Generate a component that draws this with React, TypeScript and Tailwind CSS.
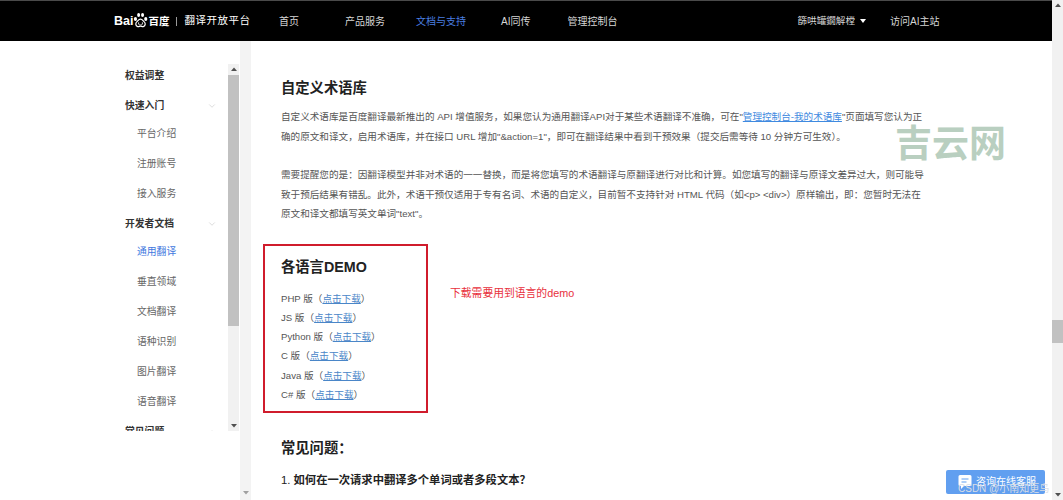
import { ChevronDown, ChevronUp } from "lucide-react";

const font = { fontFamily: '"Liberation Sans", "Noto Sans CJK SC", sans-serif' };

const sideItems = [
  { label: "权益调整", bold: true },
  { label: "快速入门", bold: true, arrow: "down" },
  { label: "平台介绍" },
  { label: "注册账号" },
  { label: "接入服务" },
  { label: "开发者文档", bold: true, arrow: "down" },
  { label: "通用翻译", active: true },
  { label: "垂直领域" },
  { label: "文档翻译" },
  { label: "语种识别" },
  { label: "图片翻译" },
  { label: "语音翻译" },
  { label: "常见问题", bold: true, arrow: "up" },
];

const demos = ["PHP 版", "JS 版", "Python 版", "C 版", "Java 版", "C# 版"];

function Paw() {
  return (
    <svg width="15" height="18" viewBox="0 0 16 18" className="-mt-[3px]">
      <ellipse cx="2.6" cy="8" rx="1.7" ry="2.1" fill="#fff" />
      <ellipse cx="6" cy="3.6" rx="1.6" ry="2.2" fill="#fff" />
      <ellipse cx="10.2" cy="3.6" rx="1.6" ry="2.2" fill="#fff" />
      <ellipse cx="13.6" cy="8" rx="1.7" ry="2.1" fill="#fff" />
      <path d="M8 8c-2 0-2.6 2-4 3-1.400 1-1.600 4.500 1 5 1.300.2 2-.4 3-.4s1.700.6 3 .4c2.600-.5 2.400-4 1-5-1.400-1-2-3-4-3z" fill="none" stroke="#fff" strokeWidth="1.300" />
      <path d="M6 11.500v2c0 1 4 1 4 0v-2" fill="none" stroke="#fff" strokeWidth="0.900" />
    </svg>
  );
}

function Header() {
  return (
    <header className="flex h-[41px] shrink-0 items-center border-t border-[#4a4a4a] bg-black pl-[114px] text-[10px] text-[#d6d6d6]">
      <div className="flex w-[165px] shrink-0 items-center text-white">
        <span className="text-[12.500px] font-bold leading-none">Bai</span>
        <Paw />
        <span className="text-[10.500px] font-bold leading-none">百度</span>
        <span className="mx-[7px] h-[9px] w-px bg-[#999]" />
        <span className="text-[10.500px] tracking-[0.500px]">翻译开放平台</span>
      </div>
      <span>首页</span>
      <span className="ml-[46px]">产品服务</span>
      <span className="ml-[31px] text-[#4a7fe0]">文档与支持</span>
      <span className="ml-[35px]">AI同传</span>
      <span className="ml-[37px]">管理控制台</span>
      <span className="ml-[180px] text-[9.600px]">篩哄罐鐗解樘</span>
      <span className="ml-[5px] h-0 w-0 border-x-[3px] border-t-[4px] border-x-transparent border-t-white" />
      <span className="ml-[24px]">访问AI主站</span>
    </header>
  );
}

function Sidebar() {
  return (
    <aside className="flex w-[240px] shrink-0">
      <nav className="mt-[21px] h-[369px] w-[228px] shrink-0 overflow-hidden pl-[125px] pr-[11px] text-[9.800px]">
        {sideItems.map((item) => (
          <div
            key={item.label}
            className={`flex h-[30px] shrink-0 items-center justify-between first:h-[29px] ${item.bold ? "font-bold text-[#333]" : item.active ? "pl-[12px] text-[#3f78e0]" : "pl-[12px] text-[#666]"} ${item.arrow === "down" ? "-mb-[2px]" : ""}`}
          >
            <span>{item.label}</span>
            {item.arrow === "down" && <ChevronDown size={10} strokeWidth={1} className="text-[#aaa]" />}
            {item.arrow === "up" && <ChevronUp size={10} strokeWidth={1} className="text-[#aaa]" />}
          </div>
        ))}
      </nav>
      <div className="mt-[23px] flex h-[367px] w-[11px] flex-col items-center bg-[#f1f1f1]">
        <Arrow up />
        <div className="mt-[1px] h-[251px] w-full bg-[#c1c1c1]" />
        <div className="flex-1" />
        <Arrow />
      </div>
    </aside>
  );
}

function Arrow({ up, color = "#505050" }: { up?: boolean; color?: string }) {
  return (
    <div className="flex h-[10px] w-full shrink-0 items-center justify-center">
      <svg width="6" height="4" viewBox="0 0 6 4">
        <path d={up ? "M3 0.500 6 4H0z" : "M0 0h6L3 3.500z"} fill={color} />
      </svg>
    </div>
  );
}

function Content() {
  return (
    <main className="min-w-0 flex-1 overflow-hidden pl-[30px] pt-[36px]">
      <h2 className="text-[14.300px] font-bold leading-[22px] text-[#222]">自定义术语库</h2>
      <div className="mt-[8px] whitespace-nowrap text-[9.600px] leading-[20px] text-[#555]">
        <p>
          自定义术语库是百度翻译最新推出的 API 增值服务，如果您认为通用翻译API对于某些术语翻译不准确，可在"
          <a className="text-[#3f8ae0] underline">管理控制台-我的术语库</a>
          "页面填写您认为正
        </p>
        <p>确的原文和译文，启用术语库，并在接口 URL 增加"&amp;action=1"，即可在翻译结果中看到干预效果（提交后需等待 10 分钟方可生效）。</p>
      </div>
      <div className="mt-[18px] whitespace-nowrap text-[9.600px] leading-[19.500px] text-[#555]">
        <p>需要提醒您的是：因翻译模型并非对术语的一一替换，而是将您填写的术语翻译与原翻译进行对比和计算。如您填写的翻译与原译文差异过大，则可能导</p>
        <p>致于预后结果有错乱。此外，术语干预仅适用于专有名词、术语的自定义，目前暂不支持针对 HTML 代码（如&lt;p&gt; &lt;div&gt;）原样输出，即：您暂时无法在</p>
        <p>原文和译文都填写英文单词"text"。</p>
      </div>
      <div className="mt-[20px] flex">
        <section className="-ml-[18px] h-[169px] w-[165px] shrink-0 border-2 border-[#d01c2c] pl-[16px] pt-[10px]">
          <h2 className="text-[14.300px] font-bold leading-[22px] text-[#222]">各语言DEMO</h2>
          <ul className="mt-[11px] whitespace-nowrap text-[9.600px] leading-[19.300px] text-[#555]">
            {demos.map((d) => (
              <li key={d}>
                {d}（<a className="text-[#4a86c8] underline">点击下载</a>）
              </li>
            ))}
          </ul>
        </section>
        <p className="ml-[22px] mt-[41px] whitespace-nowrap text-[10.800px] leading-[16px] text-[#e8303c]">下载需要用到语言的demo</p>
      </div>
      <h2 className="mt-[24px] text-[14.300px] font-bold leading-[22px] text-[#222]">常见问题：</h2>
      <p className="mt-[11px] whitespace-nowrap text-[11.300px] font-bold leading-[20px] text-[#222]">
        <span className="font-normal">1.</span> 如何在一次请求中翻译多个单词或者多段文本？
      </p>
    </main>
  );
}

export default function App() {
  return (
    <div className="relative flex h-[500px] w-[1063px] overflow-hidden bg-white" style={font}>
      <div className="flex w-[1052px] shrink-0 flex-col">
        <Header />
        <div className="flex min-h-0 flex-1">
          <Sidebar />
          <div className="flex w-[11px] shrink-0 flex-col justify-end bg-[#f3f3f3] pb-[2px]">
            <Arrow color="#a0a0a0" />
          </div>
          <Content />
        </div>
      </div>
      <div className="flex w-[11px] shrink-0 flex-col bg-[#f1f1f1]">
        <Arrow up />
        <div className="mt-[310px] h-[23px] w-full bg-[#c1c1c1]" />
        <div className="flex-1" />
        <Arrow />
      </div>

      {/* 图片水印 */}
      <div className="absolute left-[895px] top-[125px] text-[37px] font-bold leading-[40px] text-[#b9cfc0]">吉云网</div>

      {/* 在线客服 */}
      <div className="absolute left-[946px] top-[470px] flex h-[24px] w-[99px] items-center rounded-[2px] bg-[#619ff0] pb-[2px] pl-[12px] text-[10px] text-white">
        <svg width="14" height="15" viewBox="0 0 14 15" className="mr-[4px]">
          <path d="M2 1h10a1.500 1.500 0 0 1 1.500 1.500v8A1.500 1.500 0 0 1 12 12H6l-3 3v-3H2A1.500 1.500 0 0 1 .5 10.500v-8A1.500 1.500 0 0 1 2 1z" fill="#fff" />
          <path d="M3.500 5h7M3.500 8h5" stroke="#619ff0" strokeWidth="1.200" />
        </svg>
        咨询在线客服
      </div>
      <div className="absolute left-[958px] top-[482px] whitespace-nowrap text-[10px] leading-[14px] text-[#d8dde5]">CSDN @小南知更鸟</div>
    </div>
  );
}
